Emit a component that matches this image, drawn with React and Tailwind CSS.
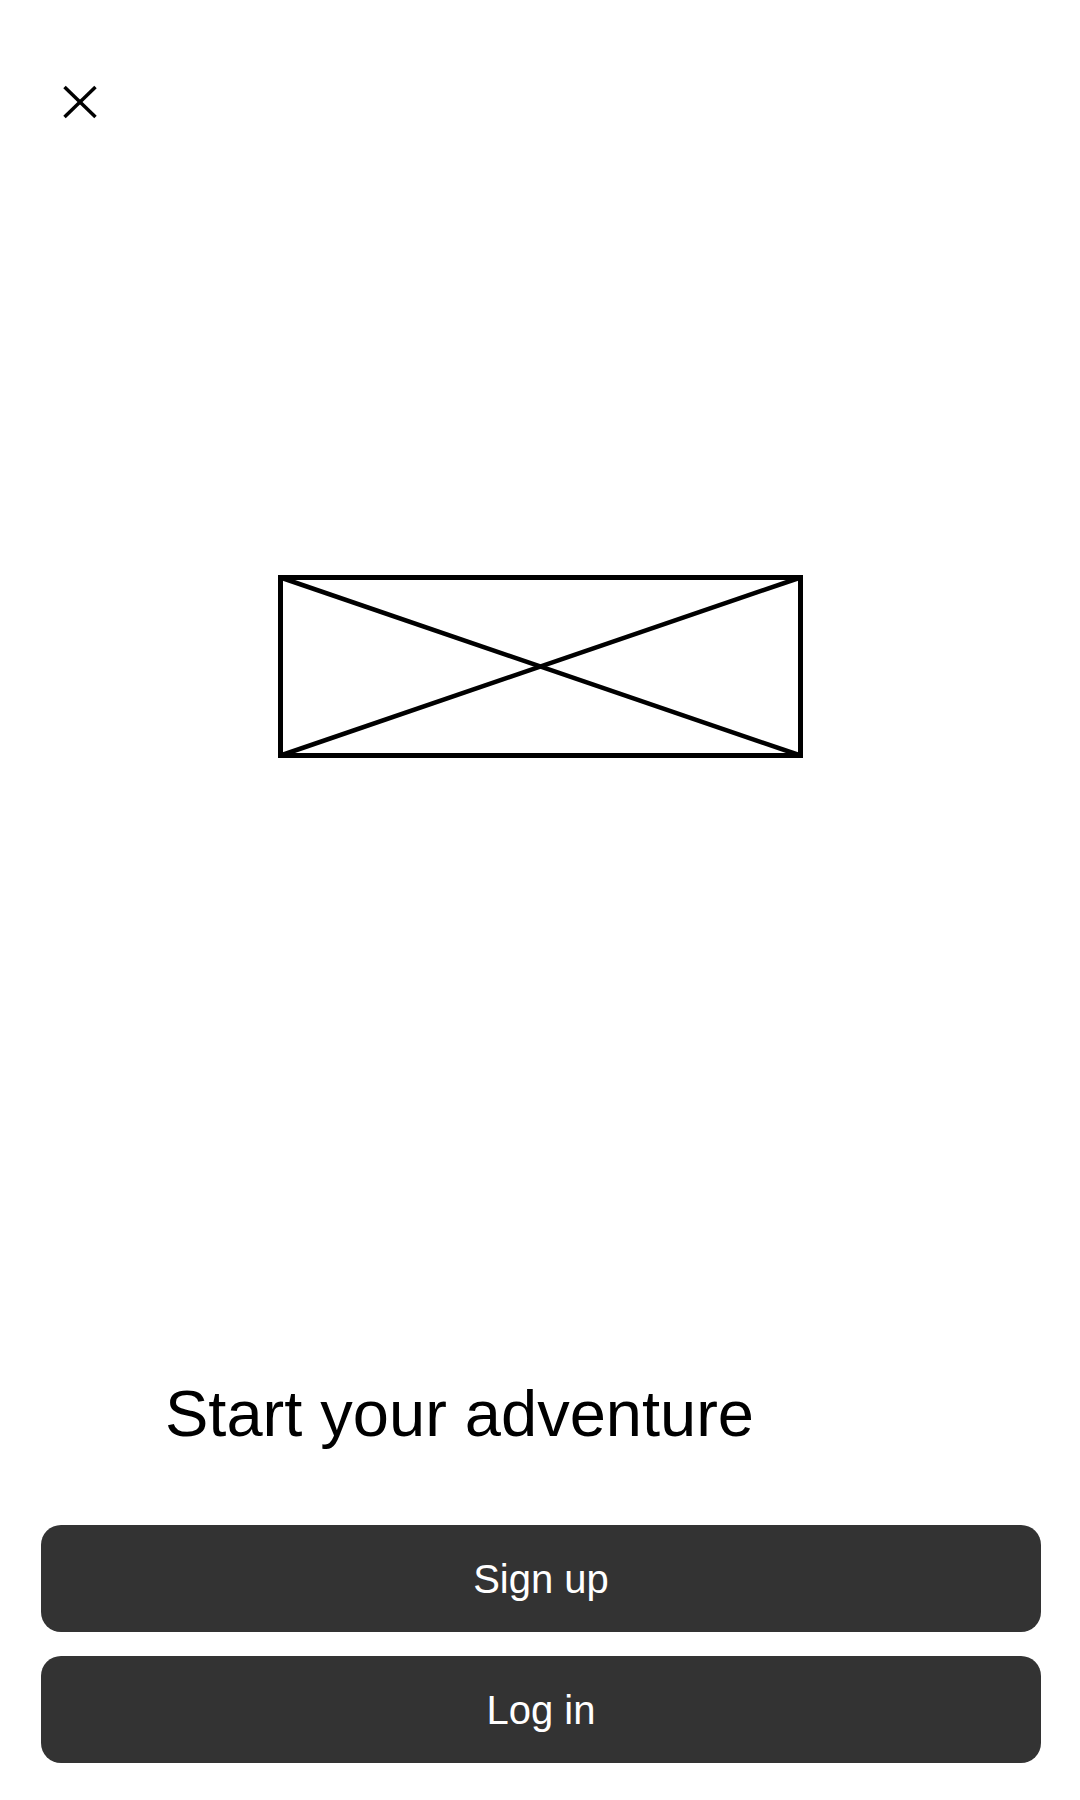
export default function App() {
  return (
    <div className="flex flex-col w-[1080px] h-[1800px] bg-white font-['Liberation_Sans',Arial,sans-serif] text-black">
      <button className="ml-[63px] mt-[85px] w-[34px] h-[34px]" aria-label="Close">
        <svg width="34" height="34" viewBox="0 0 34 34" fill="none" stroke="#000" strokeWidth="3.5">
          <line x1="1.5" y1="2" x2="32.5" y2="32" />
          <line x1="32.5" y1="2" x2="1.5" y2="32" />
        </svg>
      </button>

      {/* image placeholder */}
      <div className="mx-auto mt-[456px] w-[525px] h-[183px]">
        <svg width="525" height="183" viewBox="0 0 525 183" fill="none" stroke="#000" strokeWidth="5">
          <rect x="2.5" y="2.5" width="520" height="178" />
          <line x1="2.5" y1="2.5" x2="522.5" y2="180.5" strokeWidth="4.5" />
          <line x1="522.5" y1="2.5" x2="2.5" y2="180.5" strokeWidth="4.5" />
        </svg>
      </div>

      <h1 className="mt-[623px] pl-[165px] text-[65px] leading-[65px] font-normal">
        Start your adventure
      </h1>

      <div className="flex flex-col gap-[24px] mt-[79px] px-[41px]">
        <button className="h-[107px] w-[1000px] rounded-[20px] bg-[#333333] text-white text-[40px] leading-none">
          Sign up
        </button>
        <button className="h-[107px] w-[1000px] rounded-[20px] bg-[#333333] text-white text-[40px] leading-none">
          Log in
        </button>
      </div>
    </div>
  );
}
